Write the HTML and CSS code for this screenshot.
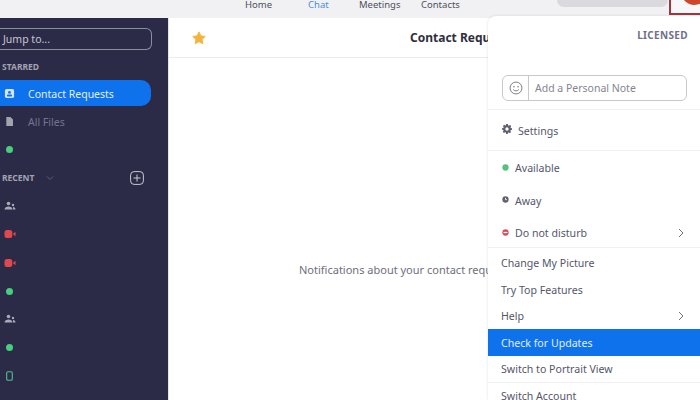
FILE: index.html
```html
<!DOCTYPE html>
<html lang="en">
<head>
<meta charset="utf-8">
<title>Zoom</title>
<link rel="stylesheet" href="styles.css">
</head>
<body>
<header class="topbar">
  <nav class="tabs">
    <span class="tab tab-home">Home</span>
    <span class="tab tab-chat">Chat</span>
    <span class="tab tab-meet">Meetings</span>
    <span class="tab tab-cont">Contacts</span>
  </nav>
  <div class="search"></div>
  <div class="avatar-frame"><div class="avatar"></div></div>
</header>
<div class="main">
  <aside class="sidebar">
    <div class="jump">Jump to...</div>
    <div class="sec-label starred">STARRED</div>
    <div class="side-row active">
      <svg class="ico" viewBox="0 0 12 12"><rect x="1" y="1" width="10" height="10" rx="2" fill="#d5e5ff"/><circle cx="6" cy="4.800" r="1.600" fill="#0e72ed"/><rect x="3.200" y="7.200" width="5.600" height="2" rx="0.800" fill="#0e72ed"/></svg>
      <span>Contact Requests</span>
    </div>
    <div class="side-row files">
      <svg class="ico" viewBox="0 0 12 12"><path d="M2.500 1h4.500l2.800 2.800V11h-7.300z" fill="#a3a3ae"/></svg>
      <span>All Files</span>
    </div>
    <div class="side-row dot-row"><i class="dot green"></i></div>
    <div class="recent">
      <span class="sec-label">RECENT</span>
      <svg class="chev" viewBox="0 0 8 6"><path d="M1 1.500l3 3 3-3" fill="none" stroke="#5f6079" stroke-width="1"/></svg>
      <svg class="plus" viewBox="0 0 14 14"><rect x="0.600" y="0.600" width="12.800" height="12.800" rx="3.500" fill="none" stroke="#c9c9d2" stroke-width="1"/><path d="M7 3.500v7M3.500 7h7" stroke="#c9c9d2" stroke-width="1"/></svg>
    </div>
    <ul class="chats">
      <li><svg class="ico-s" viewBox="0 0 12 10"><circle cx="4.500" cy="2.500" r="1.800" fill="#a9a9b8"/><path d="M0.500 8.500c0-2 2-3 4-3s4 1 4 3z" fill="#a9a9b8"/><circle cx="9" cy="4" r="1.200" fill="#a9a9b8"/><path d="M9 8.500h2.500c0-1.500-1-2.500-2.500-2.500z" fill="#a9a9b8"/></svg></li>
      <li><svg class="ico-s" viewBox="0 0 12 10"><rect x="0.500" y="1" width="7.800" height="8" rx="2.500" fill="#e0484f"/><path d="M8.800 5l2.700-2.200v4.400z" fill="#e0484f"/></svg></li>
      <li><svg class="ico-s" viewBox="0 0 12 10"><rect x="0.500" y="1" width="7.800" height="8" rx="2.500" fill="#e0484f"/><path d="M8.800 5l2.700-2.200v4.400z" fill="#e0484f"/></svg></li>
      <li><i class="dot green"></i></li>
      <li><svg class="ico-s" viewBox="0 0 12 10"><circle cx="4.500" cy="2.500" r="1.800" fill="#a9a9b8"/><path d="M0.500 8.500c0-2 2-3 4-3s4 1 4 3z" fill="#a9a9b8"/><circle cx="9" cy="4" r="1.200" fill="#a9a9b8"/><path d="M9 8.500h2.500c0-1.500-1-2.500-2.500-2.500z" fill="#a9a9b8"/></svg></li>
      <li><i class="dot green"></i></li>
      <li><svg class="ico-p" viewBox="0 0 7 10"><rect x="0.700" y="0.700" width="5.600" height="8.600" rx="1.300" fill="none" stroke="#4fc08d" stroke-width="1.100"/></svg></li>
    </ul>
  </aside>
  <section class="content">
    <div class="content-head">
      <svg class="star" viewBox="0 0 24 24"><path d="M12 1.500l3.300 6.800 7.400 1-5.400 5.200 1.300 7.400L12 18.300l-6.600 3.600 1.300-7.400L1.300 9.300l7.400-1z" fill="#f5b23d" stroke="#f5b23d" stroke-width="1.500" stroke-linejoin="round"/></svg>
      <h1 class="title">Contact Requests</h1>
    </div>
    <p class="empty">Notifications about your contact requests</p>
  </section>
</div>
<div class="menu">
  <div class="licensed">LICENSED</div>
  <div class="note">
    <span class="note-ico"><svg viewBox="0 0 16 16" width="14" height="14"><circle cx="8" cy="8" r="6.800" fill="none" stroke="#6e6e7c" stroke-width="1"/><circle cx="5.700" cy="6.500" r="0.800" fill="#6e6e7c"/><circle cx="10.300" cy="6.500" r="0.800" fill="#6e6e7c"/><path d="M4.800 9.800c1.500 2 4.900 2 6.400 0" fill="none" stroke="#6e6e7c" stroke-width="1"/></svg></span>
    <span class="note-text">Add a Personal Note</span>
  </div>
  <div class="group settings">
    <svg class="gear" viewBox="0 0 24 24"><path fill-rule="evenodd" d="M10 0h4l.7 3.200 1.900.8 2.800-1.800 2.800 2.800-1.800 2.800.8 1.900L24 10v4l-3.200.7-.8 1.900 1.800 2.800-2.800 2.800-2.800-1.800-1.900.8L14 24h-4l-.7-3.400-1.900-.8-2.800 1.800-2.800-2.800 1.800-2.800-.8-1.900L0 14v-4l3.200-.7.800-1.900L2.200 4.600 5 1.800l2.800 1.800 1.500-.6zM12 8a4 4 0 1 0 0 8 4 4 0 0 0 0-8z" fill="#5f6070"/></svg>
    <span>Settings</span>
  </div>
  <div class="group status">
    <div class="st-row"><svg class="sdot" viewBox="0 0 8 8"><circle cx="4" cy="4" r="3.600" fill="#55c27f"/></svg><span>Available</span></div>
    <div class="st-row"><svg class="sdot" viewBox="0 0 8 8"><circle cx="4" cy="4" r="3.600" fill="#5f6070"/><path d="M4 2v2.200h1.700" fill="none" stroke="#fff" stroke-width="0.900"/></svg><span>Away</span></div>
    <div class="st-row"><svg class="sdot" viewBox="0 0 8 8"><circle cx="4" cy="4" r="3.600" fill="#df4a56"/><rect x="1.800" y="3.300" width="4.400" height="1.400" fill="#fff"/></svg><span>Do not disturb</span><svg class="caret" viewBox="0 0 6 10"><path d="M1 1l4 4-4 4" fill="none" stroke="#6e6e7c" stroke-width="1"/></svg></div>
  </div>
  <div class="items">
    <div class="item">Change My Picture</div>
    <div class="item">Try Top Features</div>
    <div class="item">Help<svg class="caret" viewBox="0 0 6 10"><path d="M1 1l4 4-4 4" fill="none" stroke="#6e6e7c" stroke-width="1"/></svg></div>
    <div class="item hl">Check for Updates</div>
    <div class="item">Switch to Portrait View</div>
  </div>
  <div class="item last">Switch Account</div>
</div>
</body>
</html>
```
FILE: styles.css
```css
* { box-sizing: border-box; }
html, body { margin: 0; padding: 0; }
body {
  width: 700px; height: 400px; overflow: hidden; position: relative;
  background: #fff; font-family: "Noto Sans", "Open Sans", sans-serif; color: #55566a;
}
.topbar { height: 18px; background: #f1f1f4; display: flex; position: relative; }
.tabs { display: flex; font-size: 9.500px; line-height: 10px; padding-left: 245px; }
.tab { color: #4f4f5c; }
.tab-home { width: 63px; }
.tab-chat { width: 51px; color: #4a90d9; }
.tab-meet { width: 62px; }
.search {
  position: absolute; left: 557px; top: 0; width: 111px; height: 7px;
  background: #d9d9de; border-radius: 0 0 8px 8px;
}
.avatar-frame {
  position: absolute; left: 669px; top: 0; width: 31px; height: 15px;
  border-left: 2px solid #a4343c; border-bottom: 2px solid #a4343c;
  background: #f7f7f9; overflow: hidden;
}
.avatar { position: absolute; left: 10px; top: -22px; width: 27px; height: 27px; background: #cf452c; border-radius: 50%; }
.main { display: flex; height: 382px; }
.sidebar { width: 169px; background: #2b2b48; border-right: 1px solid #e4e4e8; flex: none; color: #c8c8d0; }
.jump {
  width: 152px; height: 22px; margin-top: 10px;
  border: 1px solid #8d8da0; border-radius: 0 6px 6px 0; border-left: 0;
  font-size: 10.500px; line-height: 20px; padding-left: 3px; color: #c6c6d0;
}
.sec-label { font-size: 8.500px; font-weight: 700; color: #a2a2b0; line-height: 12px; padding-left: 2px; }
.starred { margin-top: 11px; }
.side-row { height: 28px; width: 151px; display: flex; align-items: center; font-size: 10.500px; position: relative; }
.side-row span { margin-top: 2px; }
.side-row.active { margin-top: 7px; height: 26px; background: #0e72ed; border-radius: 0 10px 10px 0; color: #e3eeff; }
.ico { width: 11px; height: 11px; margin-left: 4px; margin-right: 13px; flex: none; }
.files { margin-top: 1px; color: #75758a; }
.dot { display: block; width: 7px; height: 7px; border-radius: 50%; background: #3ccf6e; }
.green { background: #46cf7f; }
.dot-row { padding-left: 6px; height: 28px; }
.recent { display: flex; align-items: center; height: 18px; margin-top: 6px; }
.chev { width: 8px; height: 6px; margin-left: 12px; }
.plus { width: 14px; height: 14px; margin-left: 76px; }
.chats { list-style: none; margin: 5px 0 0; padding: 0; }
.chats li { height: 28.300px; display: flex; align-items: center; padding-left: 6px; }
.ico-s { width: 12px; height: 10px; margin-left: -2px; }
.ico-p { width: 7px; height: 10px; }
.content { flex: 1; position: relative; }
.content-head { height: 40px; border-bottom: 1px solid #ececef; display: flex; align-items: center; padding-left: 23px; position: relative; }
.star { width: 14px; height: 14px; }
.title { position: absolute; left: 241px; top: 12px; margin: 0; font-size: 12px; line-height: 16px; font-weight: 700; color: #2f2f3d; white-space: nowrap; }
.empty { position: absolute; left: 130px; top: 244px; margin: 0; font-size: 11px; line-height: 15px; color: #6f6f7c; white-space: nowrap; }
.menu {
  position: absolute; left: 488px; top: 16px; width: 212px; height: 384px;
  background: #fff; border-radius: 8px 0 0 0; box-shadow: 0 0 3px rgba(0,0,0,.12);
  font-size: 10.600px; color: #55566a; overflow: hidden;
}
.licensed { text-align: right; padding: 11px 12px 0 0; font-size: 10px; line-height: 16px; font-weight: 700; color: #70708a; letter-spacing: .35px; }
.note {
  display: flex; height: 26px; margin: 32px 13px 0 14px;
  border: 1px solid #c8c8ce; border-radius: 6px; align-items: stretch;
}
.note-ico { width: 26px; display: flex; align-items: center; justify-content: center; border-right: 1px solid #c8c8ce; flex: none; }
.note-text { font-size: 10.500px; line-height: 24px; padding-left: 6px; color: #85858f; }
.group { border-top: 1px solid #f0f0f2; }
.settings { margin-top: 8px; height: 41px; display: flex; align-items: center; padding-left: 14px; }
.settings span { margin-top: 2px; }
.gear { width: 10px; height: 10px; margin-right: 6px; margin-top: -2px; }
.status { height: 97px; padding-top: .8px; }
.st-row { height: 32.500px; display: flex; align-items: center; padding-left: 14px; position: relative; }
.sdot { width: 7px; height: 7px; margin-right: 6px; margin-top: -2px; flex: none; }
.caret { width: 6px; height: 10px; position: absolute; right: 16px; top: 50%; margin-top: -5px; }
.items { border-top: 1px solid #f0f0f2; padding-top: 2px; }
.item { height: 26.500px; display: flex; align-items: center; padding-left: 13px; position: relative; color: #55566a; }
.item.hl { height: 27px; margin-top: -1px; padding-top: 1px; background: #0e72ed; color: #e3eeff; }
.item.last { border-top: 1px solid #f0f0f2; }
```
